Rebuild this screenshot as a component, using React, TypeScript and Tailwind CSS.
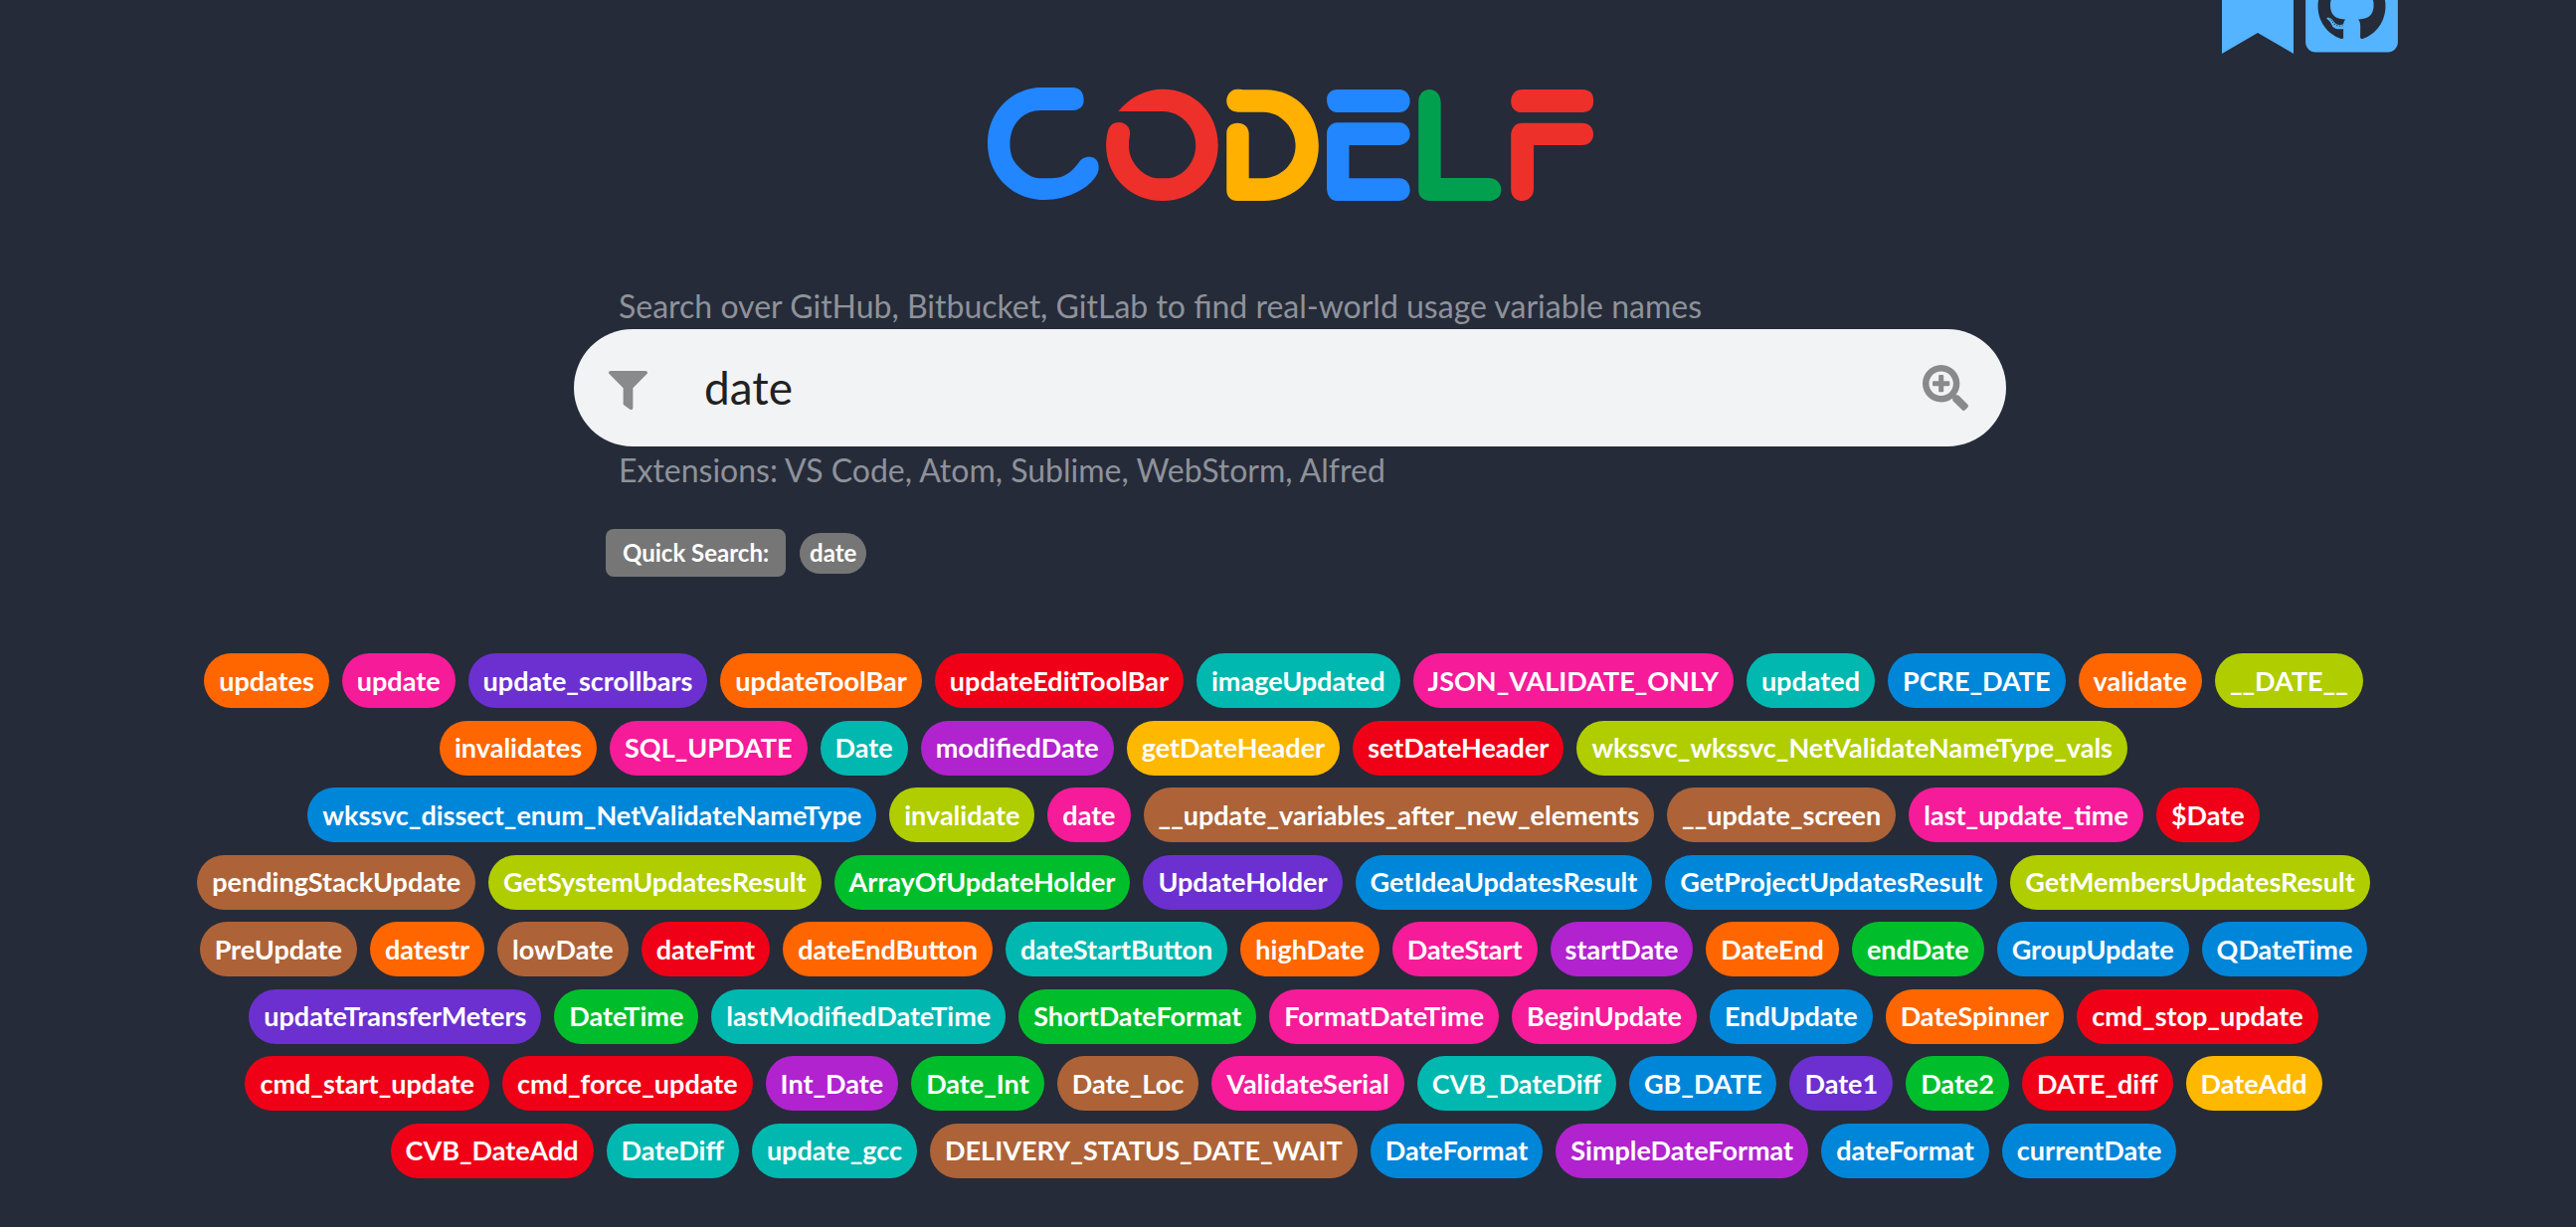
import { FaBookmark, FaFilter, FaGithubSquare, FaSearchPlus } from "react-icons/fa";

const tones = {
  orange: "bg-[#ff6600]",
  pink: "bg-[#f61b99]",
  violet: "bg-[#6b30cf]",
  red: "bg-[#f00016]",
  teal: "bg-[#00b8b0]",
  blue: "bg-[#0086d9]",
  olive: "bg-[#b0cd00]",
  green: "bg-[#00be2b]",
  purple: "bg-[#b023ce]",
  brown: "bg-[#ad6337]",
  yellow: "bg-[#ffb800]",
};

type Tone = keyof typeof tones;

const variables: [string, Tone][] = [
  ["updates", "orange"],
  ["update", "pink"],
  ["update_scrollbars", "violet"],
  ["updateToolBar", "orange"],
  ["updateEditToolBar", "red"],
  ["imageUpdated", "teal"],
  ["JSON_VALIDATE_ONLY", "pink"],
  ["updated", "teal"],
  ["PCRE_DATE", "blue"],
  ["validate", "orange"],
  ["__DATE__", "olive"],
  ["invalidates", "orange"],
  ["SQL_UPDATE", "pink"],
  ["Date", "teal"],
  ["modifiedDate", "purple"],
  ["getDateHeader", "yellow"],
  ["setDateHeader", "red"],
  ["wkssvc_wkssvc_NetValidateNameType_vals", "olive"],
  ["wkssvc_dissect_enum_NetValidateNameType", "blue"],
  ["invalidate", "olive"],
  ["date", "pink"],
  ["__update_variables_after_new_elements", "brown"],
  ["__update_screen", "brown"],
  ["last_update_time", "pink"],
  ["$Date", "red"],
  ["pendingStackUpdate", "brown"],
  ["GetSystemUpdatesResult", "olive"],
  ["ArrayOfUpdateHolder", "green"],
  ["UpdateHolder", "violet"],
  ["GetIdeaUpdatesResult", "blue"],
  ["GetProjectUpdatesResult", "blue"],
  ["GetMembersUpdatesResult", "olive"],
  ["PreUpdate", "brown"],
  ["datestr", "orange"],
  ["lowDate", "brown"],
  ["dateFmt", "red"],
  ["dateEndButton", "orange"],
  ["dateStartButton", "teal"],
  ["highDate", "orange"],
  ["DateStart", "pink"],
  ["startDate", "purple"],
  ["DateEnd", "orange"],
  ["endDate", "green"],
  ["GroupUpdate", "blue"],
  ["QDateTime", "blue"],
  ["updateTransferMeters", "violet"],
  ["DateTime", "green"],
  ["lastModifiedDateTime", "teal"],
  ["ShortDateFormat", "green"],
  ["FormatDateTime", "pink"],
  ["BeginUpdate", "pink"],
  ["EndUpdate", "blue"],
  ["DateSpinner", "orange"],
  ["cmd_stop_update", "red"],
  ["cmd_start_update", "red"],
  ["cmd_force_update", "red"],
  ["Int_Date", "purple"],
  ["Date_Int", "green"],
  ["Date_Loc", "brown"],
  ["ValidateSerial", "pink"],
  ["CVB_DateDiff", "teal"],
  ["GB_DATE", "blue"],
  ["Date1", "violet"],
  ["Date2", "green"],
  ["DATE_diff", "red"],
  ["DateAdd", "yellow"],
  ["CVB_DateAdd", "red"],
  ["DateDiff", "teal"],
  ["update_gcc", "teal"],
  ["DELIVERY_STATUS_DATE_WAIT", "brown"],
  ["DateFormat", "blue"],
  ["SimpleDateFormat", "purple"],
  ["dateFormat", "blue"],
  ["currentDate", "blue"],
];

function Logo() {
  return (
    <svg
      viewBox="31 54 1493 342"
      preserveAspectRatio="none"
      className="h-[114px] w-[609px]"
      role="img"
      aria-label="Codelf"
    >
      <g fill="#2186ff">
        <path d="M160 54H240C259 54 268 70 268 92C268 112 257 123 236 123H162C116 123 86 170 86 223C86 252 92 273 103 287C124 316 143 328 165 328H188C214 328 234 317 256 280C266 259 287 261 294 267C308 278 306 303 301 315C283 358 228 393 172 393C91 393 31 318 31 223C31 128 88 58 160 54Z" />
        <path d="M893 60H1046C1062 60 1072 76 1072 95C1072 114 1061 129 1044 129H893C876 129 867 112 867 90C867 72 878 60 893 60Z" />
        <path d="M893 160H1046C1062 160 1072 177 1072 196C1072 214 1060 228 1044 228H922V328H1046C1062 328 1072 344 1072 363C1072 383 1060 396 1044 396H893C875 396 867 379 867 354V196C867 175 877 160 893 160Z" />
      </g>
      <g fill="#ee302a">
        <path d="M353 126C382 82 421 59 462 59C541 59 599 132 599 228C599 322 542 396 462 396C382 396 323 322 323 228C323 214 325 196 328 184C332 167 342 159 354 159C373 159 383 177 382 195C380 208 379 216 379 230C379 284 419 328 453 328H472C507 328 544 286 544 228C544 176 509 126 462 126Z" />
        <path d="M1348 60H1496C1514 60 1524 71 1524 90V99C1524 117 1513 129 1496 129H1348C1331 129 1321 116 1321 95C1321 76 1332 60 1348 60Z" />
        <path d="M1348 161H1496C1513 161 1524 174 1524 195C1524 215 1513 228 1496 228H1377V360C1377 383 1363 396 1348 396C1333 396 1321 383 1321 359V200C1321 178 1331 161 1348 161Z" />
      </g>
      <path
        fill="#ffb000"
        d="M646 59C655 59 659 61 668 61H715C795 61 847 138 847 230C847 324 789 396 711 396H646C630 396 620 383 620 364V192C620 172 631 161 647 161C664 161 675 174 675 194V328H706C753 328 790 286 790 228C790 178 754 128 711 128H648C631 128 620 114 620 94C620 77 630 59 646 59Z"
      />
      <path
        fill="#00a04f"
        d="M1120 60C1136 60 1148 76 1148 100V327H1265C1283 327 1297 341 1297 362C1297 383 1284 396 1266 396H1122C1104 396 1093 384 1093 364V98C1093 76 1104 60 1120 60Z"
      />
    </svg>
  );
}

export default function App() {
  return (
    <div className="min-h-screen overflow-hidden bg-[#252b39] pl-1 font-['Lato',sans-serif]">
      <header className="flex h-[54px] items-end justify-end gap-3 pr-[179px] text-[#54b4ff]">
        <a href="#bookmarks" aria-label="Bookmarks">
          <FaBookmark className="h-24 w-[72px]" />
        </a>
        <a href="#github" aria-label="GitHub" className="-mb-[5px]">
          <FaGithubSquare className="h-[106px] w-[93px]" />
        </a>
      </header>

      <main>
        <h1 className="mt-[34px] flex justify-center">
          <Logo />
        </h1>

        <form className="mx-auto mt-[86px] max-w-[1440px]" onSubmit={(e) => e.preventDefault()}>
          <label htmlFor="query" className="block pb-1 pl-[45px] text-[32px] leading-[39px] text-[#8f9299]">
            Search over GitHub, Bitbucket, GitLab to find real-world usage variable names
          </label>
          <div className="flex h-[118px] items-center rounded-full bg-[#f1f3f5] pr-[38px] pl-[35px] text-[#888a8c]">
            <button type="button" aria-label="Filter languages" className="pt-1">
              <FaFilter className="size-[39px]" />
            </button>
            <input
              id="query"
              type="text"
              defaultValue="date"
              className="ml-[57px] min-w-0 flex-1 bg-transparent text-[46px] leading-[60px] text-[#212121] outline-none"
            />
            <button type="submit" aria-label="Search">
              <FaSearchPlus className="size-[46px]" />
            </button>
          </div>
          <p className="pl-[45px] text-[32px] leading-[48px] text-[#8f9299]">
            Extensions: <a href="#vscode">VS Code</a>, <a href="#atom">Atom</a>, <a href="#sublime">Sublime</a>,{" "}
            <a href="#webstorm">WebStorm</a>, <a href="#alfred">Alfred</a>
          </p>
          <div className="mt-[35px] flex items-center gap-[14px] pl-8 text-2xl leading-6 font-bold text-white">
            <span className="rounded-lg bg-[#767676] px-[17px] py-3">Quick Search:</span>
            <a href="#date" className="rounded-full bg-[#767676] px-[10px] pt-2 pb-[9px]">
              date
            </a>
          </div>
        </form>

        <div className="mx-auto mt-[77px] flex min-h-[528px] max-w-[2235px] flex-wrap content-between justify-center gap-y-3">
          {variables.map(([name, tone]) => (
            <button
              key={name}
              type="button"
              className={`${tones[tone]} mr-[13px] h-[55px] rounded-full px-[15px] text-[27px] leading-7 font-bold text-white`}
            >
              {name}
            </button>
          ))}
        </div>
      </main>
    </div>
  );
}
